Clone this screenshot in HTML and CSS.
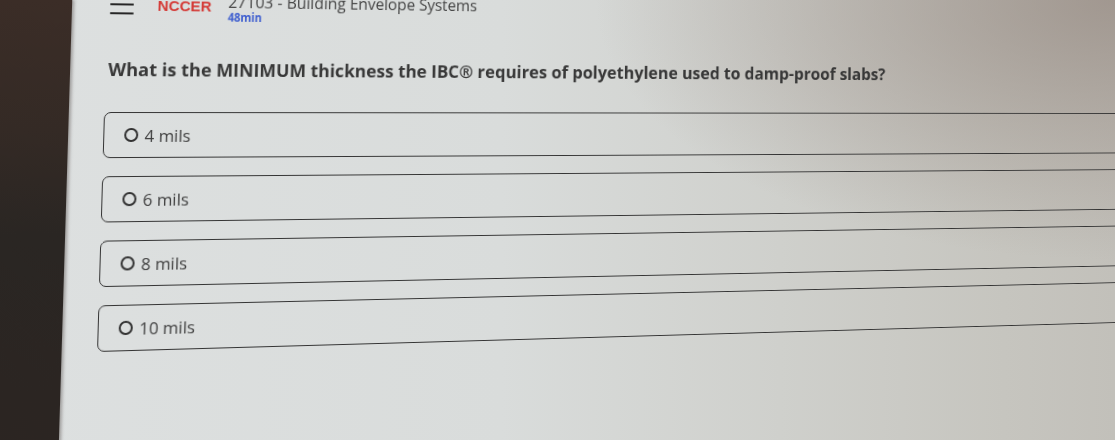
FILE: index.html
```html
<!DOCTYPE html>
<html lang="en">
<head>
<meta charset="utf-8">
<title>NCCER - 27103 Building Envelope Systems</title>
<link rel="stylesheet" href="styles.css">
</head>
<body>
<div class="stage">
  <div class="bezel"></div>
  <main class="screen">
    <header class="header">
      <div class="menu" aria-label="Menu">
        <span class="menu-line"></span>
        <span class="menu-line"></span>
        <span class="menu-line"></span>
      </div>
      <div class="logo">NCCER</div>
      <div class="course">
        <div class="course-title">27103 - Building Envelope Systems</div>
        <div class="course-time">48min</div>
      </div>
    </header>
    <h1 class="question">What is the MINIMUM thickness the IBC® requires of polyethylene used to damp-proof slabs?</h1>
    <div class="options">
      <label class="option"><span class="radio"></span><span class="option-text">4 mils</span></label>
      <label class="option"><span class="radio"></span><span class="option-text">6 mils</span></label>
      <label class="option"><span class="radio"></span><span class="option-text">8 mils</span></label>
      <label class="option"><span class="radio"></span><span class="option-text">10 mils</span></label>
    </div>
  </main>
</div>
</body>
</html>
```
FILE: styles.css
```css
html, body {
  margin: 0;
  padding: 0;
  width: 1115px;
  height: 440px;
  overflow: hidden;
}

body {
  font-family: "Open Sans", Lato, "Liberation Sans", sans-serif;
  background:
    radial-gradient(ellipse 520px 260px at 100% 0%, rgba(150, 138, 130, 0.75), rgba(150, 138, 130, 0) 100%),
    linear-gradient(to right, #dde0e0 0%, #d9dcdb 45%, #cfd0cc 70%, #c6c5bf 90%, #c2c0ba 100%);
}

.stage {
  display: flex;
  width: 1560px;
  height: 520px;
  margin-left: -40px;
  transform-origin: 144px 112px;
  transform: matrix3d(1, 0.0009891, 0, 0.00012292, -0.029209, 1.001471, 0, -0.000028891, 0, 0, 1, 0, 0, 0, 0, 1);
}

.bezel {
  width: 109px;
  flex: none;
  background: linear-gradient(to bottom, #3b2d27 0%, #342a25 25%, #2a2623 45%, #2b2522 75%, #2c2522 100%);
  box-shadow: 2px 0 3px rgba(40, 30, 25, 0.35);
}

.screen {
  flex: 1;
  padding-left: 35px;
}

.header {
  display: flex;
  align-items: flex-start;
  height: 71px;
  margin-top: -13px;
}

.menu {
  display: flex;
  flex-direction: column;
  gap: 6.2px;
  width: 24px;
  margin: 7.5px 0 0 3px;
}

.menu-line {
  display: block;
  height: 2.4px;
  background: #262626;
  border-radius: 1px;
}

.logo {
  margin: 10px 0 0 24px;
  font-family: "Liberation Sans", Arial, sans-serif;
  font-weight: 700;
  font-size: 15.5px;
  line-height: 16px;
  color: #d43b37;
}

.course {
  margin: 3.5px 0 0 17px;
}

.course-title {
  font-size: 16.5px;
  line-height: 18px;
  color: #454545;
}

.course-time {
  margin-top: 0;
  font-size: 11.5px;
  line-height: 14px;
  font-weight: 700;
  color: #3f5fcf;
}

.question {
  margin: 0 0 0 3px;
  font-size: 18.5px;
  line-height: 22px;
  font-weight: 700;
  color: #383838;
}

.options {
  display: flex;
  flex-direction: column;
  gap: 18px;
  margin-top: 32px;
}

.option {
  display: flex;
  align-items: center;
  box-sizing: border-box;
  width: 1420px;
  height: 46px;
  padding-left: 20px;
  border: 1.7px solid #343434;
  border-radius: 7px;
}

.radio {
  flex: none;
  box-sizing: border-box;
  width: 13.5px;
  height: 13.5px;
  border: 2px solid #333;
  border-radius: 50%;
}

.option-text {
  margin-left: 7px;
  font-size: 17px;
  color: #404040;
}
```
